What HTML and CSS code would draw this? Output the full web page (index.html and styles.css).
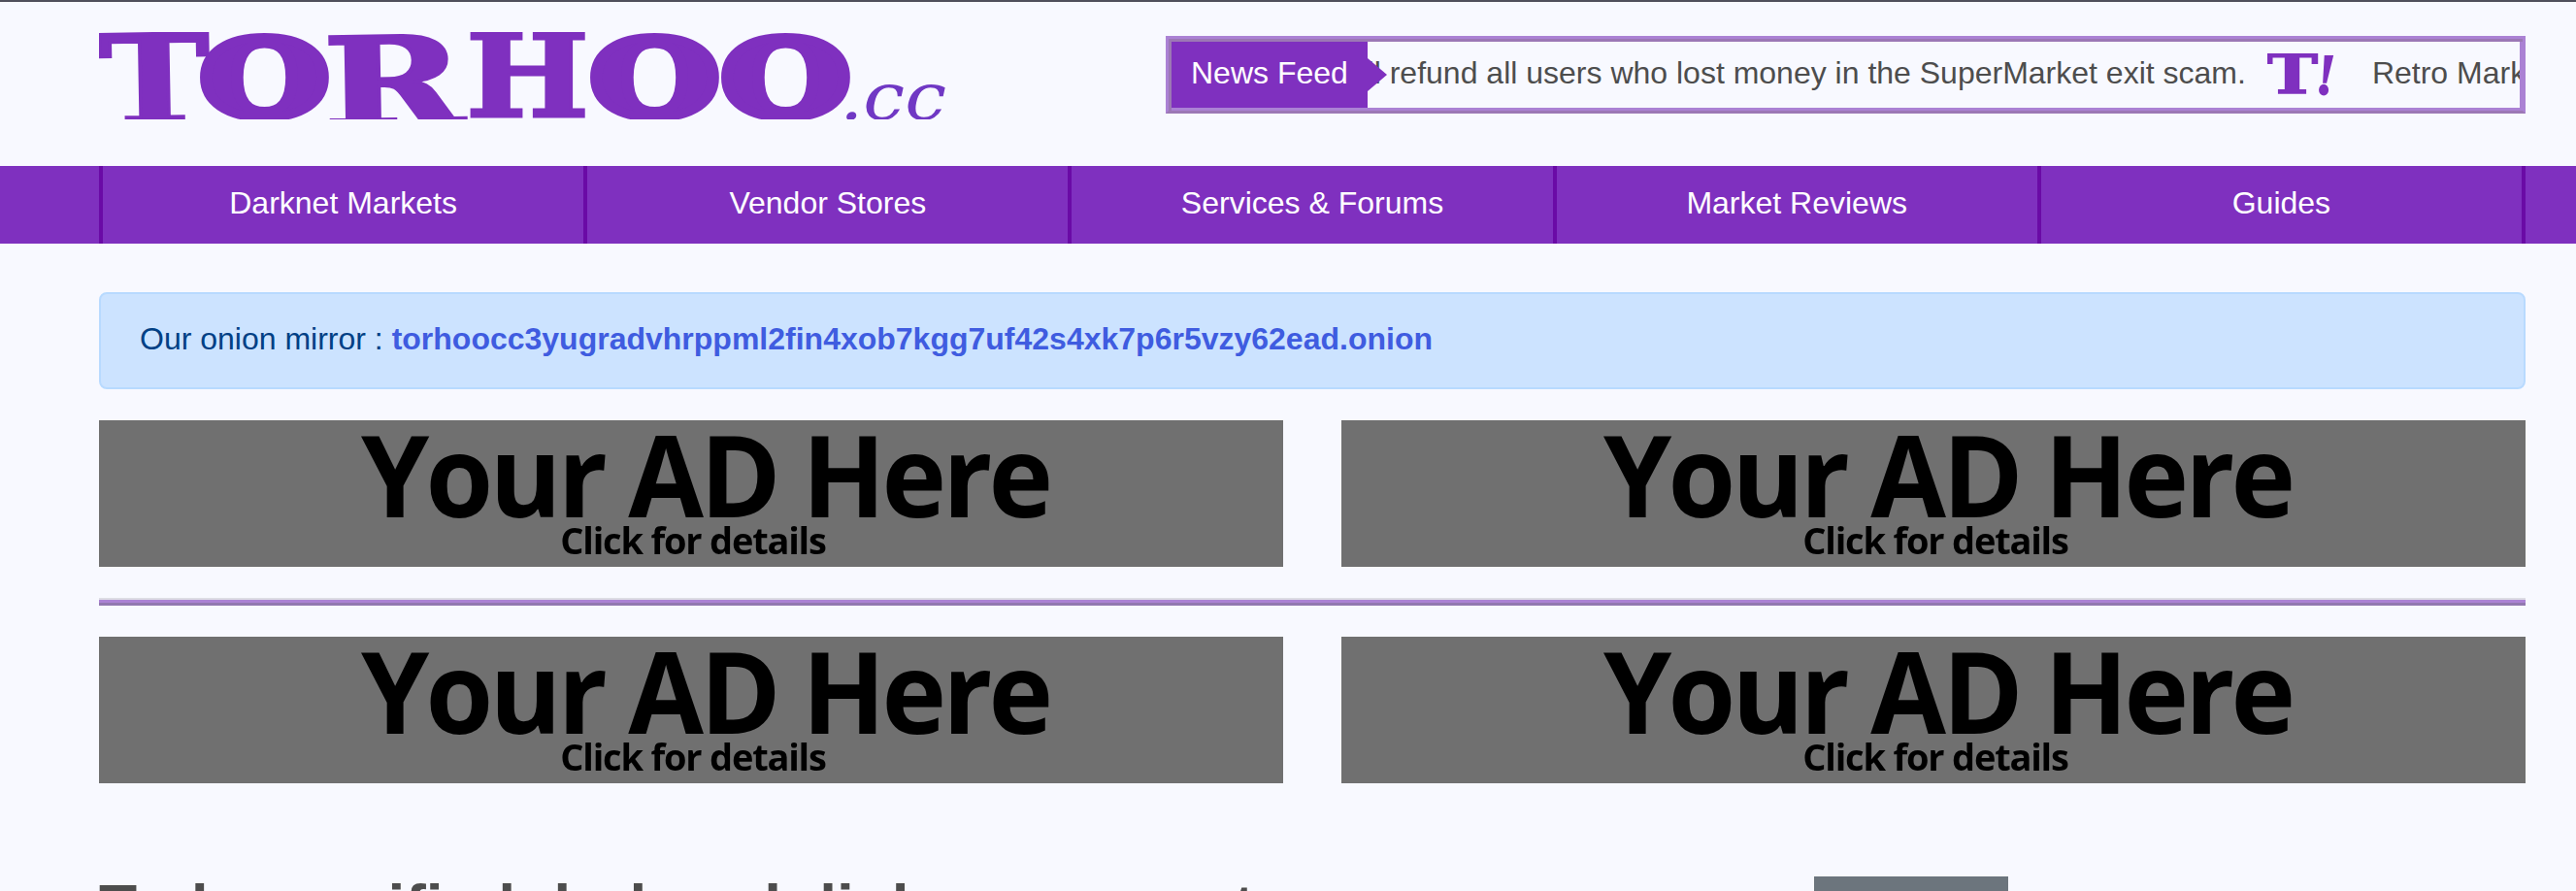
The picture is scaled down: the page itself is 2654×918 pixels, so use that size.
FILE: index.html
```html
<!DOCTYPE html>
<html lang="en">
<head>
<meta charset="utf-8">
<title>Torhoo.cc</title>
<link rel="stylesheet" href="styles.css">
</head>
<body>
<header class="site-header">
  <a class="logo" href="#" aria-label="Torhoo.cc">
    <svg class="logo-svg" width="880" height="90" viewBox="0 0 880 90">
      <g class="logo-letters">
        <text x="0" y="95" font-size="128" textLength="114" lengthAdjust="spacingAndGlyphs" transform="rotate(-1 50 50)">T</text>
        <text class="logo-o" x="104" y="86" font-size="108" textLength="133" lengthAdjust="spacingAndGlyphs">O</text>
        <text x="231" y="97" font-size="128" textLength="145" lengthAdjust="spacingAndGlyphs" transform="rotate(-1 300 50)">R</text>
        <text x="378" y="87" font-size="119" textLength="127" lengthAdjust="spacingAndGlyphs">H</text>
        <text class="logo-o" x="506" y="86" font-size="108" textLength="133" lengthAdjust="spacingAndGlyphs">O</text>
        <text class="logo-o" x="641" y="86" font-size="108" textLength="133" lengthAdjust="spacingAndGlyphs">O</text>
      </g>
      <text class="logo-tld" x="763" y="90" font-size="68" textLength="110" lengthAdjust="spacingAndGlyphs">.cc</text>
    </svg>
  </a>
  <div class="ticker">
    <div class="ticker-inner">
      <div class="ticker-track">
        <span>they will refund all users who lost money in the SuperMarket exit scam.</span>
        <svg class="ticker-mark" width="70" height="44" viewBox="0 0 70 44">
          <text class="mark-t" x="-1" y="41" font-size="56" textLength="53" lengthAdjust="spacingAndGlyphs">T</text>
          <text class="mark-bang" x="50" y="42" font-size="60" textLength="20" lengthAdjust="spacingAndGlyphs">!</text>
        </svg>
        <span>Retro Market is back online for all users</span>
      </div>
      <div class="ticker-label">News Feed</div>
    </div>
  </div>
</header>

<nav class="main-nav">
  <ul class="nav-list">
    <li class="nav-item"><a href="#">Darknet Markets</a></li>
    <li class="nav-item"><a href="#">Vendor Stores</a></li>
    <li class="nav-item"><a href="#">Services &amp; Forums</a></li>
    <li class="nav-item"><a href="#">Market Reviews</a></li>
    <li class="nav-item"><a href="#">Guides</a></li>
  </ul>
</nav>

<main class="content">
  <div class="alert">Our onion mirror : <a href="#">torhoocc3yugradvhrppml2fin4xob7kgg7uf42s4xk7p6r5vzy62ead.onion</a></div>

  <section class="ad-row">
    <a class="ad" href="#"><span class="ad-title">Your AD Here</span><span class="ad-sub">Click for details</span></a>
    <a class="ad" href="#"><span class="ad-title">Your AD Here</span><span class="ad-sub">Click for details</span></a>
  </section>
  <hr class="divider">
  <section class="ad-row">
    <a class="ad" href="#"><span class="ad-title">Your AD Here</span><span class="ad-sub">Click for details</span></a>
    <a class="ad" href="#"><span class="ad-title">Your AD Here</span><span class="ad-sub">Click for details</span></a>
  </section>

  <div class="heading-row">
    <h2 class="page-title">Today verified dark web links comment</h2>
    <a class="grey-btn" href="#"></a>
  </div>
</main>
</body>
</html>
```
FILE: styles.css
```css
* { box-sizing: border-box; }

html, body { height: 100%; }

body {
  margin: 0;
  overflow: hidden;
  background: #f8f9ff;
  border-top: 2px solid #50505c;
  font-family: "Liberation Sans", Arial, sans-serif;
  font-size: 32px;
  color: #4d4d4d;
}

a { text-decoration: none; }

/* header */
.site-header {
  height: 169px;
  padding: 31px 52px 0 102px;
  display: flex;
  justify-content: space-between;
  align-items: flex-start;
}

.logo { display: block; height: 90px; }

.logo-svg { display: block; overflow: hidden; }

.logo-letters text {
  font-family: "DejaVu Serif", serif;
  font-weight: 700;
  fill: #7f30bf;
  stroke: #7f30bf;
  stroke-width: 3px;
}

.logo-letters .logo-o { stroke-width: 9px; }

.logo-tld {
  font-family: "DejaVu Serif", serif;
  font-style: italic;
  fill: #7038c4;
}

.ticker {
  width: 1401px;
  height: 80px;
  margin-top: 4px;
  padding: 3px;
  border-style: solid;
  border-width: 3px;
  border-color: #ab82d4 #ab82d4 #9c78b5 #ab82d4;
  box-shadow: inset 3px 3px 0 #9c78b5, inset -3px -3px 0 #ab82d4;
}

.ticker-inner {
  position: relative;
  height: 68px;
  overflow: hidden;
}

.ticker-track {
  height: 68px;
  margin-left: 102px;
  padding-bottom: 4px;
  display: flex;
  align-items: center;
  gap: 22px;
  white-space: nowrap;
}

.ticker-mark { flex: none; margin: 4px 16px 0 0; }

.mark-t {
  font-family: "DejaVu Serif", serif;
  font-weight: 700;
  fill: #7f30bf;
  stroke: #7f30bf;
  stroke-width: 1.5px;
}

.mark-bang {
  font-family: "Liberation Serif", serif;
  font-weight: 700;
  font-style: italic;
  fill: #7f30bf;
  stroke: #7f30bf;
  stroke-width: 2px;
}

.ticker-label {
  position: absolute;
  top: 0;
  bottom: 0;
  left: 0;
  width: 202px;
  padding: 0 0 4px 20px;
  display: flex;
  align-items: center;
  background: #7f30bf;
  color: #fff;
}

.ticker-label::after {
  content: "";
  position: absolute;
  left: 100%;
  top: 17px;
  border-left: 20px solid #7f30bf;
  border-top: 17px solid transparent;
  border-bottom: 17px solid transparent;
}

/* nav */
.main-nav {
  height: 80px;
  padding: 0 52px 0 102px;
  background: #7f30bf;
}

.nav-list {
  height: 100%;
  margin: 0;
  padding: 0;
  list-style: none;
  display: flex;
}

.nav-item {
  flex: 1 1 0;
  padding-bottom: 4px;
  display: flex;
  align-items: center;
  justify-content: center;
  border-left: 4px solid #6a0aa6;
}

.nav-item:last-child { border-right: 4px solid #6a0aa6; }

.nav-item a { color: #fff; }

/* content */
.content { padding: 50px 52px 0 102px; }

.alert {
  height: 100px;
  padding: 22px 40px 26px;
  line-height: 48px;
  background: #cce3ff;
  border: 2px solid #b8daff;
  border-radius: 8px;
  color: #004085;
  margin-bottom: 32px;
}

.alert a { font-weight: 700; color: #3f5ce0; }

.ad-row {
  display: grid;
  grid-template-columns: 1fr 1fr;
  gap: 60px;
}

.ad {
  height: 151px;
  background: #707070;
  color: #000;
  font-family: "Open Sans", sans-serif;
  font-weight: 700;
  display: flex;
  flex-direction: column;
  align-items: center;
  overflow: hidden;
}

.ad-title {
  font-size: 117px;
  line-height: 110px;
  letter-spacing: -4px;
  padding-left: 30px;
  white-space: nowrap;
  transform: scaleX(0.963);
  filter: blur(0.6px);
}

.ad-sub {
  margin-top: -7px;
  font-size: 38px;
  line-height: 40px;
  letter-spacing: -1.2px;
  padding-left: 4px;
  filter: blur(0.5px);
}

.divider {
  margin: 32px 0;
  height: 8px;
  border: 0;
  border-top: 2px solid #dddde4;
  border-bottom: 3px solid #9278b0;
  background: #ab82d4;
}

.heading-row {
  margin-top: 90px;
  display: flex;
  align-items: flex-start;
}

.page-title {
  flex: 0 0 1767px;
  margin: 0;
  font-size: 64px;
  line-height: 76px;
  font-weight: 700;
  color: #4d4d4d;
  white-space: nowrap;
}

.grey-btn {
  display: block;
  width: 200px;
  height: 80px;
  margin-top: 6px;
  background: #6c757d;
}
```
